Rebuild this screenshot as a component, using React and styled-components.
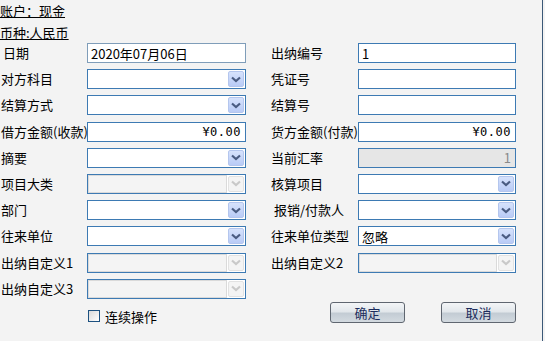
import React from 'react';
import styled, { createGlobalStyle } from 'styled-components';

const Global = createGlobalStyle`
	html, body {
		margin: 0;
		padding: 0;
		background: #f3f3f3;
	}
	body {
		font-family: "Noto Sans CJK SC", "Liberation Sans", sans-serif;
		font-size: 13px;
		color: #000;
	}
`;

const Window = styled.div`
	width: 543px;
	height: 341px;
	border-right: 1px solid #3b5878;
	box-sizing: border-box;
	overflow: hidden;
`;

const Header = styled.div`
	display: flex;
	flex-direction: column;
	gap: 3px;
	padding-top: 1px;
	height: 43px;
	box-sizing: border-box;
	.head-line {
		text-decoration: underline;
		font-size: 13px;
		line-height: 18px;
	}
`;

const Form = styled.div`
	display: grid;
	grid-template-columns: 87px 159px 24px 88px 158px;
	grid-auto-rows: 20px;
	row-gap: 6.2px;
	align-items: center;
`;

const Label = styled.div`
	font-size: 13px;
	line-height: 20px;
	white-space: nowrap;
	padding-left: ${p => p.$indent || 1}px;
	grid-column: ${p => p.$right ? 4 : 1};
`;

const Field = styled.div`
	grid-column: ${p => p.$right ? 5 : 2};
	height: 20px;
	box-sizing: border-box;
	border: 1px solid ${p => p.$light ? '#7f9db9' : '#3d7ab3'};
	background: ${p => p.$readonly ? '#e6e6e6' : '#fff'};
	display: flex;
	align-items: center;
	justify-content: ${p => p.$align === 'right' ? 'flex-end' : 'flex-start'};
	padding: 0 ${p => p.$align === 'right' ? '4px' : '3px'};
	font-size: ${p => p.$money ? '12px' : '13px'};
	color: ${p => p.$readonly ? '#8a8a8a' : '#000'};
	letter-spacing: ${p => p.$money ? '0.5px' : '0'};
	font-family: ${p => p.$money ? '"DejaVu Sans Mono", monospace' : 'inherit'};
`;

const Combo = styled.div`
	grid-column: ${p => p.$right ? 5 : 2};
	height: 20px;
	box-sizing: border-box;
	border: 1px solid #3d7ab3;
	background: #fff;
	display: flex;
	align-items: stretch;
	.combo-body {
		flex: 1;
		display: flex;
		align-items: center;
		padding-left: 3px;
		font-size: 13px;
		background: ${p => p.$disabled ? '#f4f4f4' : '#fff'};
		border: ${p => p.$disabled ? '1px solid #dadada' : '0'};
	}
`;

const ArrowBtn = styled.div`
	width: 16px;
	margin: 1px;
	box-sizing: border-box;
	border: 1px solid ${p => p.$disabled ? '#e2e2e2' : '#b4c6ee'};
	border-radius: 2px;
	background: ${p => p.$disabled
		? '#f4f4f4'
		: 'linear-gradient(#d6e2fc, #b9cbf6)'};
	display: flex;
	align-items: center;
	justify-content: center;
`;

const Check = styled.div`
	grid-column: 2;
	display: flex;
	align-items: center;
	gap: 5px;
	padding-left: 1px;
	margin-top: 3px;
	font-size: 13px;
	.box {
		width: 12px;
		height: 12px;
		box-sizing: border-box;
		border: 1px solid #1d5180;
		background: linear-gradient(135deg, #d9d9d9, #fff);
	}
`;

const Buttons = styled.div`
	grid-column: 4 / 6;
	display: flex;
	justify-content: space-between;
	padding-left: 60px;
	align-self: start;
	margin-top: -3px;
`;

const Button = styled.div`
	width: 75px;
	height: 21px;
	box-sizing: border-box;
	border: 1px solid #5f6670;
	border-radius: 3px;
	background: linear-gradient(#f3f5f7 0%, #e2e7eb 45%, #c3ccd4 55%, #d3dae0 100%);
	color: #1c2c5c;
	font-size: 13px;
	display: flex;
	align-items: center;
	justify-content: center;
`;

const Chevron = ({ disabled }) => (
	<svg width="10" height="7" viewBox="0 0 10 7">
		<path d="M1 1.5 L5 5 L9 1.5" fill="none" stroke={disabled ? '#c9c9c9' : '#4a5c82'} strokeWidth="2.2" />
	</svg>
);

const Select = ({ right, disabled, value }) => (
	<Combo $right={right} $disabled={disabled}>
		<div className="combo-body">{value}</div>
		<ArrowBtn $disabled={disabled}><Chevron disabled={disabled} /></ArrowBtn>
	</Combo>
);

export default function App() {
	return (
		<>
			<Global />
			<Window>
				<Header>
					<div><span className="head-line">账户：现金</span></div>
					<div><span className="head-line">币种:人民币</span></div>
				</Header>
				<Form>
					<Label $indent={3}>日期</Label>
					<Field $light>2020年07月06日</Field>
					<Label $right>出纳编号</Label>
					<Field $right>1</Field>

					<Label>对方科目</Label>
					<Select />
					<Label $right>凭证号</Label>
					<Field $right />

					<Label>结算方式</Label>
					<Select />
					<Label $right>结算号</Label>
					<Field $right />

					<Label>借方金额(收款)</Label>
					<Field $align="right" $money>¥0.00</Field>
					<Label $right>货方金额(付款)</Label>
					<Field $right $align="right" $money>¥0.00</Field>

					<Label>摘要</Label>
					<Select />
					<Label $right>当前汇率</Label>
					<Field $right $align="right" $readonly>1</Field>

					<Label>项目大类</Label>
					<Select disabled />
					<Label $right>核算项目</Label>
					<Select right />

					<Label>部门</Label>
					<Select />
					<Label $right $indent={4}>报销/付款人</Label>
					<Select right />

					<Label>往来单位</Label>
					<Select />
					<Label $right>往来单位类型</Label>
					<Select right value="忽略" />

					<Label>出纳自定义1</Label>
					<Select disabled />
					<Label $right>出纳自定义2</Label>
					<Select right disabled />

					<Label>出纳自定义3</Label>
					<Select disabled />

					<Check><div className="box" />连续操作</Check>
					<Buttons>
						<Button>确定</Button>
						<Button>取消</Button>
					</Buttons>
				</Form>
			</Window>
		</>
	);
}
